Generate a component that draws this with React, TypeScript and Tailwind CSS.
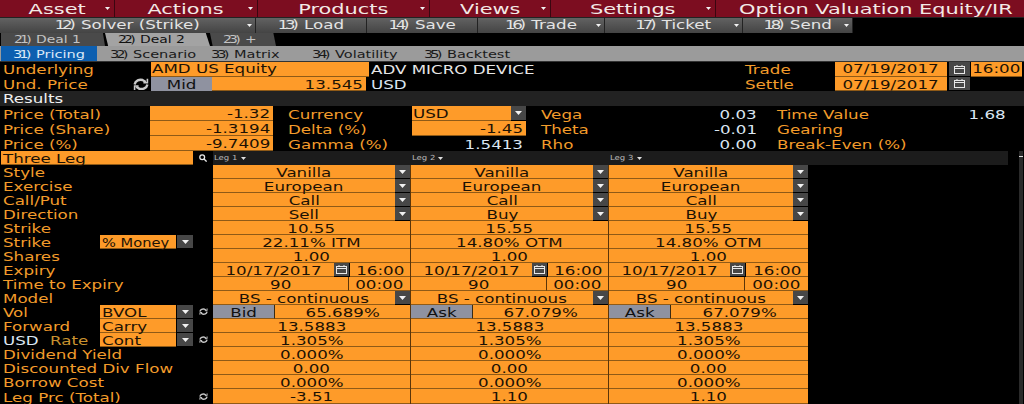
import React from "react";

type TP = { children: React.ReactNode; a?: "l" | "c" | "r"; className?: string };
const T = ({ children, a = "l", className = "" }: TP) => (
  <span
    className={
      "inline-block whitespace-nowrap scale-x-[var(--sx)] pt-[var(--pt)] " +
      (a === "l" ? "origin-left " : a === "c" ? "origin-center " : "origin-right ") +
      className
    }
  >
    {children}
  </span>
);
const N = ({ children }: { children: React.ReactNode }) => <span className="tracking-[-0.2em] mr-[0.2em]">{children}</span>;

const Tri = () => (
  <svg width="7" height="4" viewBox="0 0 7 4">
    <path d="M0 0H7L3.5 4Z" fill="#f2f2f2" />
  </svg>
);
const DD = ({ w = "w-[15px]" }: { w?: string }) => (
  <div className={"h-full shrink-0 flex items-center justify-center bg-[#474747] border-b border-black " + w}>
    <Tri />
  </div>
);
const Cal = ({ w = "w-[15px]" }: { w?: string }) => (
  <div className={"h-full shrink-0 flex items-center justify-center bg-[#474747] border-b border-black " + w}>
    <svg width="11" height="9" viewBox="0 0 11 9" fill="none" stroke="#e8e8e8">
      <rect x="0.5" y="1.5" width="10" height="7" />
      <path d="M0.5 3.5H10.5M3 0V2M8 0V2" />
    </svg>
  </div>
);
const Refresh = ({ s = 9 }: { s?: number }) => (
  <svg width={s} height={s * 0.8} viewBox="0 0 20 16" fill="none" stroke="#c9c9c9" strokeWidth="3">
    <path d="M2 8C3 3 8 1.5 12 2.5L16 5M18 8C17 13 12 14.5 8 13.5L4 11" />
    <path d="M18 1V6H13M2 15V10H7" strokeWidth="2" />
  </svg>
);

const Orange = ({ children, className = "", a = "c" }: { children?: React.ReactNode; className?: string; a?: "l" | "c" | "r" }) => (
  <div
    className={
      "h-full flex items-center bg-[#fe9b29] text-[#1c1204] border-b border-[#8f5a17] " +
      (a === "l" ? "justify-start pl-[1px] " : a === "c" ? "justify-center " : "justify-end pr-[3px] ") +
      className
    }
  >
    {children !== undefined && <T a={a}>{children}</T>}
  </div>
);

const Menu = ({ label, w }: { label: string; w: string }) => (
  <div className={"h-full relative flex items-center justify-center border-r border-[#3a0610] " + w}>
    <T a="c">{label}</T>
    <span className="absolute right-[4px] top-[7px]">
      <svg width="5" height="3" viewBox="0 0 7 4"><path d="M0 0H7L3.5 4Z" fill="#f2f2f2" /></svg>
    </span>
  </div>
);

const Tool = ({ n, label, w, dd }: { n: string; label: string; w: string; dd?: boolean }) => (
  <div className={"h-full relative flex items-center justify-center pb-[2px] border-r border-[#222] bg-gradient-to-b from-[#626262] to-[#444] " + w}>
    <T a="c"><N>{n}</N> {label}</T>
    {dd && (
      <span className="absolute right-[3px] top-[6px]">
        <svg width="5" height="3" viewBox="0 0 7 4"><path d="M0 0H7L3.5 4Z" fill="#f2f2f2" /></svg>
      </span>
    )}
  </div>
);

const Label = ({ children, className = "" }: { children: React.ReactNode; className?: string }) => (
  <div className={"h-full flex items-center text-[#f39c2b] pl-[3px] " + className}>
    <T>{children}</T>
  </div>
);

const Val = ({ children, className = "" }: { children: React.ReactNode; className?: string }) => (
  <div className={"h-full flex items-center justify-end text-[#dbe6f2] " + className}>
    <T a="r">{children}</T>
  </div>
);

const ResRow = ({ children }: { children: React.ReactNode }) => <div className="h-[15px] flex">{children}</div>;

type Leg = React.ReactNode;
const Row = ({ left, legs, h = "h-[14px]" }: { left: React.ReactNode; legs: Leg[]; h?: string }) => (
  <div className={"flex " + h}>
    <div className="w-[213px] h-full flex items-center shrink-0">{left}</div>
    <div className="w-[198px] h-full flex border-r border-[#5a3509]">{legs[0]}</div>
    <div className="w-[198px] h-full flex border-r border-[#5a3509]">{legs[1]}</div>
    <div className="w-[199px] h-full flex">{legs[2]}</div>
  </div>
);

const Dd = ({ t }: { t: string }) => (
  <>
    <Orange className="flex-1">{t}</Orange>
    <DD />
  </>
);
const Pl = ({ t }: { t: string }) => <Orange className="flex-1">{t}</Orange>;
const three = (f: (t: string) => React.ReactNode, a: string, b: string, c: string) => [f(a), f(b), f(c)];
const dd3 = (t: string) => three((x) => <Dd t={x} />, t, t, t);
const pl3 = (a: string, b = a, c = a) => three((x) => <Pl t={x} />, a, b, c);

const Expiry = () => (
  <>
    <Orange className="w-[121px]">10/17/2017</Orange>
    <Cal />
    <Orange className="flex-1 ml-[1px]">16:00</Orange>
  </>
);
const Tte = () => (
  <>
    <Orange className="w-[136px] border-r border-r-[#5a3509]">90</Orange>
    <Orange className="flex-1">00:00</Orange>
  </>
);
const Vol = ({ s, v }: { s: string; v: string }) => (
  <>
    <div className="w-[62px] h-full flex items-center justify-center bg-[#8f92a0] text-[#111] border-r border-[#3a2a12] border-b border-b-[#8f5a17]">
      <T a="c">{s}</T>
    </div>
    <Orange className="flex-1">{v}</Orange>
  </>
);

const Selector = ({ t, refresh, narrow }: { t: string; refresh?: boolean; narrow?: boolean }) => (
  <>
    <div className={"w-[76px] h-full ml-auto " + (narrow ? "[--sx:1.22]" : "")}>
      <Orange a="l" className="pl-[2px]">{t}</Orange>
    </div>
    <div className="w-[16px] h-full ml-[1px]">
      <DD w="w-[16px]" />
    </div>
    <div className="w-[20px] h-full flex items-center justify-center">{refresh && <Refresh />}</div>
  </>
);

const LegTab = ({ t, w }: { t: string; w: string }) => (
  <div className={"h-full shrink-0 flex items-center justify-center gap-[2px] bg-[#1c1c1c] text-[#b9b9b9] text-[7px] [--sx:1.22] [--pt:0px] " + w}>
    <T a="c">{t}</T>
    <span className="ml-[3px]">
      <svg width="5" height="3" viewBox="0 0 7 4"><path d="M0 0H7L3.5 4Z" fill="#e0e0e0" /></svg>
    </span>
  </div>
);

export default function App() {
  return (
    <div className="w-[1024px] h-[404px] overflow-hidden bg-black text-[12px] leading-none font-['DejaVu_Sans',sans-serif] [--sx:1.39] [--pt:2px]">
      {/* Menu */}
      <div className="h-[18px] flex bg-[#7c0d20] text-[#f3e9e6] text-[14px] border-b border-[#222] [--sx:1.49] [--pt:0px]">
        <Menu label="Asset" w="w-[115px]" />
        <Menu label="Actions" w="w-[143px]" />
        <Menu label="Products" w="w-[172px]" />
        <Menu label="Views" w="w-[121px]" />
        <Menu label="Settings" w="w-[165px]" />
        <div className="flex-1 h-full flex items-center justify-center pl-[11px]">
          <T a="c">Option Valuation Equity/IR</T>
        </div>
      </div>
      {/* Toolbar */}
      <div className="h-[15px] flex text-[#e4e4e4] text-[12px] [--pt:0px]">
        <Tool n="12)" label="Solver (Strike)" w="w-[256px]" dd />
        <Tool n="13)" label="Load" w="w-[111px]" />
        <Tool n="14)" label="Save" w="w-[111px]" />
        <Tool n="16)" label="Trade" w="w-[127px]" dd />
        <Tool n="17)" label="Ticket" w="w-[138px]" dd />
        <Tool n="18)" label="Send" w="w-[110px]" dd />
      </div>
      {/* Deal tabs */}
      <div className="h-[13px] flex text-[10px] pl-[1px] [--pt:0px]">
        <div className="w-[104px] h-full flex items-center pl-[13px] bg-[#4a4a4a] text-[#c4c4c4] [clip-path:polygon(0_0,98%_0,100%_100%,0_100%)]">
          <T><N>21)</N> Deal 1</T>
        </div>
        <div className="w-[105px] h-full flex items-center pl-[13px] bg-[#a3a3a3] text-[#111] [clip-path:polygon(0_0,96%_0,100%_100%,3%_100%)]">
          <T><N>22)</N> Deal 2</T>
        </div>
        <div className="w-[66px] h-full flex items-center pl-[13px] bg-[#4a4a4a] text-[#c4c4c4] [clip-path:polygon(0_0,96%_0,100%_100%,4%_100%)]">
          <T><N>23)</N> +</T>
        </div>
      </div>
      {/* Sub tabs */}
      <div className="h-[16px] flex items-stretch bg-[#9b9b9b] text-[11px] text-[#1a1a1a] pl-[1px] border-b border-[#333] [--sx:1.32]">
        <div className="w-[96px] flex items-center pl-[12px] bg-[#0d5fb0] text-[#dbe9f7]">
          <T><N>31)</N> Pricing</T>
        </div>
        <div className="w-[114px] flex items-center pl-[13px]"><T><N>32)</N> Scenario</T></div>
        <div className="w-[101px] flex items-center"><T><N>33)</N> Matrix</T></div>
        <div className="w-[112px] flex items-center"><T><N>34)</N> Volatility</T></div>
        <div className="flex items-center"><T><N>35)</N> Backtest</T></div>
      </div>
      {/* Underlying */}
      <div className="h-[15px] flex [--pt:0px]">
        <Label className="w-[151px]">Underlying</Label>
        <Orange a="l" className="w-[218px]">AMD US Equity</Orange>
        <div className="w-[376px] h-full flex items-center pl-[2px] text-[#e6e6e6]"><T>ADV MICRO DEVICE</T></div>
        <div className="w-[90px] h-full flex items-center text-[#f39c2b]"><T>Trade</T></div>
        <Orange className="w-[112px]">07/19/2017</Orange>
        <div className="ml-[2px]"><Cal w="w-[21px]" /></div>
        <Orange className="w-[51px] ml-[1px]">16:00</Orange>
      </div>
      <div className="h-[14px] flex">
        <Label className="w-[131px]">Und. Price</Label>
        <div className="w-[20px] h-full flex items-center justify-center"><Refresh s={16} /></div>
        <div className="w-[61px] h-full flex items-center justify-center bg-[#8f92a0] text-[#111]"><T a="c">Mid</T></div>
        <Orange a="r" className="w-[154px]">13.545</Orange>
        <div className="w-[379px] h-full flex items-center pl-[5px] text-[#dbe6f2]"><T>USD</T></div>
        <div className="w-[90px] h-full flex items-center text-[#f39c2b]"><T>Settle</T></div>
        <Orange className="w-[112px]">07/19/2017</Orange>
        <div className="ml-[2px]"><Cal w="w-[21px]" /></div>
      </div>
      {/* Results */}
      <div className="h-[15px] flex items-center bg-[#222] text-[#f0f0f0] pl-[3px] [--pt:0px]"><T>Results</T></div>
      <ResRow>
        <Label className="w-[150px]">Price (Total)</Label>
        <Orange a="r" className="w-[123px]">-1.32</Orange>
        <div className="w-[139px] h-full flex items-center pl-[15px] text-[#f39c2b]"><T>Currency</T></div>
        <Orange a="l" className="w-[99px]">USD</Orange>
        <DD />
        <div className="w-[216px] h-full flex items-center pl-[15px] text-[#f39c2b]"><T>Vega</T></div>
        <Val className="w-[15px]">0.03</Val>
        <div className="w-[249px] h-full flex items-center pl-[20px] text-[#f39c2b]"><T>Time Value</T></div>
        <Val className="w-0">1.68</Val>
      </ResRow>
      <ResRow>
        <Label className="w-[150px]">Price (Share)</Label>
        <Orange a="r" className="w-[123px]">-1.3194</Orange>
        <div className="w-[139px] h-full flex items-center pl-[15px] text-[#f39c2b]"><T>Delta (%)</T></div>
        <Orange a="r" className="w-[114px]">-1.45</Orange>
        <div className="w-[216px] h-full flex items-center pl-[15px] text-[#f39c2b]"><T>Theta</T></div>
        <Val className="w-[15px]">-0.01</Val>
        <div className="w-[229px] h-full flex items-center pl-[20px] text-[#f39c2b]"><T>Gearing</T></div>
      </ResRow>
      <ResRow>
        <Label className="w-[150px]">Price (%)</Label>
        <Orange a="r" className="w-[123px]">-9.7409</Orange>
        <div className="w-[139px] h-full flex items-center pl-[15px] text-[#f39c2b]"><T>Gamma (%)</T></div>
        <Val className="w-[111px]">1.5413</Val>
        <div className="w-[219px] h-full flex items-center pl-[18px] text-[#f39c2b]"><T>Rho</T></div>
        <Val className="w-[15px]">0.00</Val>
        <div className="w-[229px] h-full flex items-center pl-[20px] text-[#f39c2b]"><T>Break-Even (%)</T></div>
      </ResRow>
      {/* Three leg header */}
      <div className="h-[14px] flex relative">
        <div className="w-[192px] h-full ml-[1px]"><Orange a="l" className="pl-[2px]">Three Leg</Orange></div>
        <div className="w-[20px] h-full flex items-center justify-center">
          <svg width="8" height="8" viewBox="0 0 10 10" fill="none" stroke="#e8e8e8" strokeWidth="1.6">
            <circle cx="4" cy="4" r="3" />
            <path d="M6 6L9.5 9.5" />
          </svg>
        </div>
        <div className="w-[795px] h-full flex bg-[#1c1c1c]">
          <LegTab t="Leg 1" w="w-[36px]" />
          <div className="w-[162px]" />
          <LegTab t="Leg 2" w="w-[35px]" />
          <div className="w-[163px]" />
          <LegTab t="Leg 3" w="w-[36px]" />
        </div>
        <div className="absolute left-[1019px] top-0 w-[4px] h-[253px] bg-[#2a2a2a]">
          <div className="mt-[5px] h-[1px] bg-[#dddddd]" />
        </div>
      </div>
      {/* Table */}
      <Row left={<Label>Style</Label>} legs={dd3("Vanilla")} />
      <Row left={<Label>Exercise</Label>} legs={dd3("European")} />
      <Row left={<Label>Call/Put</Label>} legs={dd3("Call")} />
      <Row left={<Label>Direction</Label>} legs={three((x) => <Dd t={x} />, "Sell", "Buy", "Buy")} />
      <Row left={<Label>Strike</Label>} legs={pl3("10.55", "15.55", "15.55")} />
      <Row left={<><Label>Strike</Label><Selector t="% Money" narrow /></>} legs={pl3("22.11% ITM", "14.80% OTM", "14.80% OTM")} />
      <Row left={<Label>Shares</Label>} legs={pl3("1.00")} />
      <Row left={<Label>Expiry</Label>} legs={[<Expiry />, <Expiry />, <Expiry />]} />
      <Row left={<Label>Time to Expiry</Label>} legs={[<Tte />, <Tte />, <Tte />]} />
      <Row left={<Label>Model</Label>} legs={dd3("BS - continuous")} />
      <Row left={<><Label>Vol</Label><Selector t="BVOL" refresh /></>} legs={[<Vol s="Bid" v="65.689%" />, <Vol s="Ask" v="67.079%" />, <Vol s="Ask" v="67.079%" />]} />
      <Row left={<><Label>Forward</Label><Selector t="Carry" /></>} legs={pl3("13.5883")} />
      <Row
        left={
          <>
            <div className="h-full w-[50px] flex items-center pl-[3px] text-[#dbe6f2]"><T>USD</T></div>
            <div className="h-full flex items-center text-[#c9922f]"><T>Rate</T></div>
            <Selector t="Cont" refresh />
          </>
        }
        legs={pl3("1.305%")}
      />
      <Row left={<Label>Dividend Yield</Label>} legs={pl3("0.000%")} />
      <Row left={<Label>Discounted Div Flow</Label>} legs={pl3("0.00")} />
      <Row left={<Label>Borrow Cost</Label>} legs={pl3("0.000%")} />
      <Row
        h="h-[15px]"
        left={
          <>
            <Label>Leg Prc (Total)</Label>
            <div className="ml-auto w-[20px] h-full flex items-center justify-center"><Refresh /></div>
          </>
        }
        legs={pl3("-3.51", "1.10", "1.10")}
      />
    </div>
  );
}
